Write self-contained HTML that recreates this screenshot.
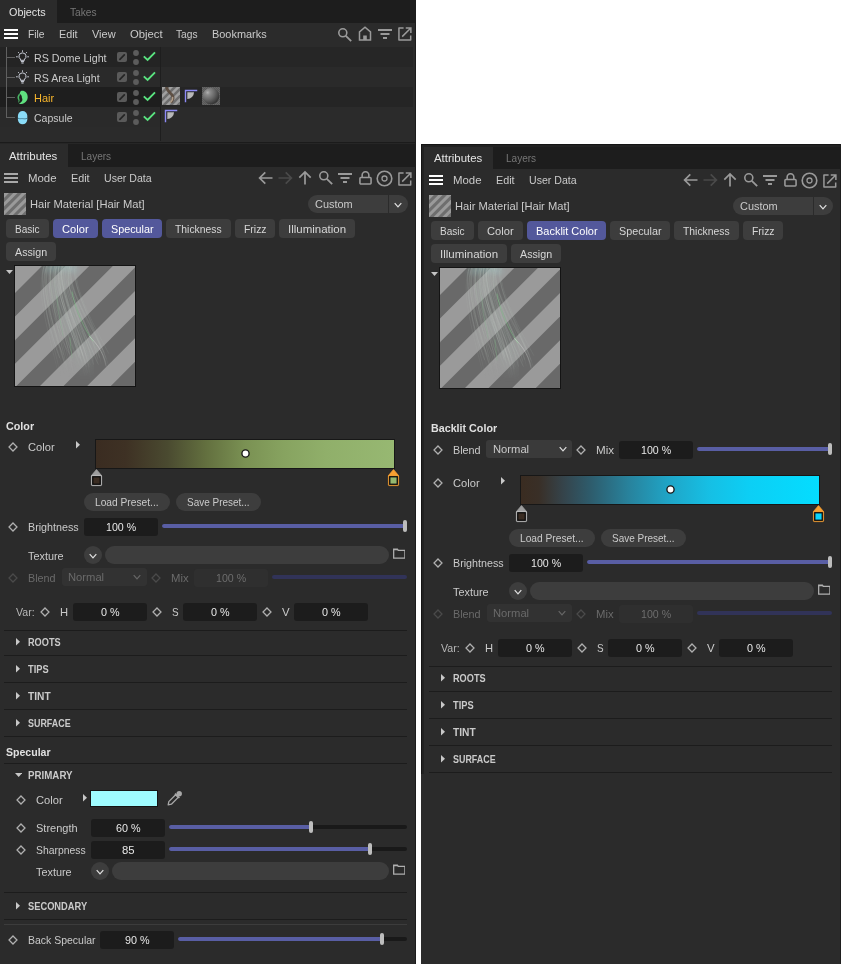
<!DOCTYPE html>
<html lang="en"><head><meta charset="utf-8"><title>Hair Material</title><style>
html,body{margin:0;padding:0;background:#fff;}
body{width:841px;height:964px;position:relative;overflow:hidden;font-family:"Liberation Sans",sans-serif;font-size:11.5px;}
.b{position:absolute;display:block;}
.t{position:absolute;display:block;white-space:pre;line-height:16px;height:16px;transform-origin:0 50%;}
</style></head>
<body>
<div class="b" style="left:0px;top:0px;width:416px;height:964px;background:#2b2b2b;"></div>
<div class="b" style="left:0px;top:0px;width:416px;height:23px;background:#1d1d1d;"></div>
<div class="b" style="left:0px;top:0px;width:57px;height:23px;background:#2b2b2b;"></div>
<span class="t" style="left:8.50px;top:4.00px;color:#e4e4e4;transform:scaleX(0.9385);">Objects</span>
<span class="t" style="left:69.50px;top:4.00px;color:#777;transform:scaleX(0.8853);">Takes</span>
<div class="b" style="left:4px;top:29px;width:14px;height:2px;background:#ffffff;"></div>
<div class="b" style="left:4px;top:33px;width:14px;height:2px;background:#ffffff;"></div>
<div class="b" style="left:4px;top:37px;width:14px;height:2px;background:#ffffff;"></div>
<span class="t" style="left:27.50px;top:26.00px;color:#cacaca;transform:scaleX(0.8958);">File</span>
<span class="t" style="left:58.50px;top:26.00px;color:#cacaca;transform:scaleX(0.9381);">Edit</span>
<span class="t" style="left:91.50px;top:26.00px;color:#cacaca;transform:scaleX(0.9547);">View</span>
<span class="t" style="left:129.50px;top:26.00px;color:#cacaca;transform:scaleX(0.9805);">Object</span>
<span class="t" style="left:175.50px;top:26.00px;color:#cacaca;transform:scaleX(0.8890);">Tags</span>
<span class="t" style="left:211.50px;top:26.00px;color:#cacaca;transform:scaleX(0.9490);">Bookmarks</span>
<svg class="b" style="left:337px;top:27px;" width="16" height="16" viewBox="0 0 16 16"><circle cx="5.8" cy="5.8" r="4" fill="none" stroke="#9a9a9a" stroke-width="1.6"/><path d="M8.8 8.8 L14.2 14.2" stroke="#9a9a9a" stroke-width="1.8" stroke-linecap="butt"/></svg>
<svg class="b" style="left:358px;top:26px;" width="14" height="15" viewBox="0 0 14 15"><path d="M1.5 14 V5.8 L7 1.2 L12.5 5.8 V14 Z" fill="none" stroke="#9a9a9a" stroke-width="1.5" stroke-linejoin="miter"/><rect x="5.2" y="9.5" width="3.6" height="4.5" fill="#9a9a9a"/></svg>
<svg class="b" style="left:378px;top:29px;" width="14" height="12" viewBox="0 0 14 12"><rect x="0" y="0" width="14" height="2" fill="#9a9a9a"/><rect x="2.5" y="4" width="9" height="2" fill="#9a9a9a"/><rect x="5" y="8" width="4" height="2" fill="#9a9a9a"/></svg>
<svg class="b" style="left:398px;top:27px;" width="14" height="14" viewBox="0 0 15 15"><path d="M6 1.2 H1 V13.8 H13.6 V9" fill="none" stroke="#9a9a9a" stroke-width="1.6" stroke-linejoin="round"/><path d="M4.5 10.3 L13.2 1.5 M8.3 1 H13.8 V6.5" fill="none" stroke="#9a9a9a" stroke-width="1.6"/></svg>
<div class="b" style="left:0px;top:47px;width:160px;height:20px;background:#242424;"></div>
<div class="b" style="left:160px;top:47px;width:253px;height:20px;background:#262626;"></div>
<div class="b" style="left:0px;top:67px;width:160px;height:20px;background:#2a2a2a;"></div>
<div class="b" style="left:160px;top:67px;width:253px;height:20px;background:#2a2a2a;"></div>
<div class="b" style="left:0px;top:87px;width:160px;height:20px;background:#1e1e1e;"></div>
<div class="b" style="left:160px;top:87px;width:253px;height:20px;background:#252525;"></div>
<div class="b" style="left:0px;top:107px;width:160px;height:20px;background:#2a2a2a;"></div>
<div class="b" style="left:160px;top:107px;width:253px;height:20px;background:#2b2b2b;"></div>
<div class="b" style="left:160px;top:47px;width:1px;height:94px;background:#1e1e1e;"></div>
<div class="b" style="left:6px;top:47px;width:1px;height:71px;background:#606060;"></div>
<div class="b" style="left:6px;top:57px;width:9px;height:1px;background:#606060;"></div>
<div class="b" style="left:6px;top:77px;width:9px;height:1px;background:#606060;"></div>
<div class="b" style="left:6px;top:97px;width:9px;height:1px;background:#606060;"></div>
<div class="b" style="left:6px;top:117px;width:9px;height:1px;background:#606060;"></div>
<span class="t" style="left:33.80px;top:50.00px;color:#cacaca;transform:scaleX(0.9310);">RS Dome Light</span>
<svg class="b" style="left:117px;top:52px;" width="10" height="10" viewBox="0 0 10 10"><rect x="0" y="0" width="10" height="10" rx="2" fill="#5a5a5a"/><path d="M2.9 7.3 L7.3 2.9" stroke="#242424" stroke-width="1.7" stroke-linecap="round"/></svg>
<svg class="b" style="left:133px;top:50px;" width="6" height="15" viewBox="0 0 6 15"><circle cx="3" cy="3" r="2.9" fill="#5c5c5c"/><circle cx="3" cy="12" r="2.9" fill="#5c5c5c"/></svg>
<svg class="b" style="left:143px;top:51px;" width="14" height="11" viewBox="0 0 14 11"><path d="M0.8 5.4 L4.6 9 L12 1.4" fill="none" stroke="#5ae480" stroke-width="1.9"/></svg>
<span class="t" style="left:33.80px;top:70.00px;color:#cacaca;transform:scaleX(0.9244);">RS Area Light</span>
<svg class="b" style="left:117px;top:72px;" width="10" height="10" viewBox="0 0 10 10"><rect x="0" y="0" width="10" height="10" rx="2" fill="#5a5a5a"/><path d="M2.9 7.3 L7.3 2.9" stroke="#242424" stroke-width="1.7" stroke-linecap="round"/></svg>
<svg class="b" style="left:133px;top:70px;" width="6" height="15" viewBox="0 0 6 15"><circle cx="3" cy="3" r="2.9" fill="#5c5c5c"/><circle cx="3" cy="12" r="2.9" fill="#5c5c5c"/></svg>
<svg class="b" style="left:143px;top:71px;" width="14" height="11" viewBox="0 0 14 11"><path d="M0.8 5.4 L4.6 9 L12 1.4" fill="none" stroke="#5ae480" stroke-width="1.9"/></svg>
<span class="t" style="left:33.80px;top:90.00px;color:#f7b52c;transform:scaleX(0.9529);">Hair</span>
<svg class="b" style="left:117px;top:92px;" width="10" height="10" viewBox="0 0 10 10"><rect x="0" y="0" width="10" height="10" rx="2" fill="#5a5a5a"/><path d="M2.9 7.3 L7.3 2.9" stroke="#242424" stroke-width="1.7" stroke-linecap="round"/></svg>
<svg class="b" style="left:133px;top:90px;" width="6" height="15" viewBox="0 0 6 15"><circle cx="3" cy="3" r="2.9" fill="#5c5c5c"/><circle cx="3" cy="12" r="2.9" fill="#5c5c5c"/></svg>
<svg class="b" style="left:143px;top:91px;" width="14" height="11" viewBox="0 0 14 11"><path d="M0.8 5.4 L4.6 9 L12 1.4" fill="none" stroke="#5ae480" stroke-width="1.9"/></svg>
<span class="t" style="left:33.80px;top:110.00px;color:#cacaca;transform:scaleX(0.9146);">Capsule</span>
<svg class="b" style="left:117px;top:112px;" width="10" height="10" viewBox="0 0 10 10"><rect x="0" y="0" width="10" height="10" rx="2" fill="#5a5a5a"/><path d="M2.9 7.3 L7.3 2.9" stroke="#242424" stroke-width="1.7" stroke-linecap="round"/></svg>
<svg class="b" style="left:133px;top:110px;" width="6" height="15" viewBox="0 0 6 15"><circle cx="3" cy="3" r="2.9" fill="#5c5c5c"/><circle cx="3" cy="12" r="2.9" fill="#5c5c5c"/></svg>
<svg class="b" style="left:143px;top:111px;" width="14" height="11" viewBox="0 0 14 11"><path d="M0.8 5.4 L4.6 9 L12 1.4" fill="none" stroke="#5ae480" stroke-width="1.9"/></svg>
<svg class="b" style="left:15px;top:50px;" width="15" height="14" viewBox="0 0 15 14"><path d="M7.5 2.9 A3.45 3.45 0 0 0 5.5 9.2 V10.3 H9.5 V9.2 A3.45 3.45 0 0 0 7.5 2.9 Z" fill="none" stroke="#d2d6e0" stroke-width="1"/><path d="M5.9 11.6 H9.1 M6.4 13 H8.6" stroke="#d2d6e0" stroke-width="1"/><path d="M7.5 0.4 V1.8 M3.2 2.2 L4.2 3.3 M11.8 2.2 L10.8 3.3 M1.1 6.8 H2.7 M12.3 6.8 H13.9" stroke="#d2d6e0" stroke-width="1"/></svg>
<svg class="b" style="left:15px;top:70px;" width="15" height="14" viewBox="0 0 15 14"><path d="M7.5 2.9 A3.45 3.45 0 0 0 5.5 9.2 V10.3 H9.5 V9.2 A3.45 3.45 0 0 0 7.5 2.9 Z" fill="none" stroke="#d2d6e0" stroke-width="1"/><path d="M5.9 11.6 H9.1 M6.4 13 H8.6" stroke="#d2d6e0" stroke-width="1"/><path d="M7.5 0.4 V1.8 M3.2 2.2 L4.2 3.3 M11.8 2.2 L10.8 3.3 M1.1 6.8 H2.7 M12.3 6.8 H13.9" stroke="#d2d6e0" stroke-width="1"/></svg>
<svg class="b" style="left:16px;top:90px;" width="13" height="15" viewBox="0 0 13 15"><path d="M5 1 C8.5 0.2 11.8 3 11.7 7.2 C11.6 10.8 9 13.4 5.5 14 C4.5 14.2 3.4 14.1 3 13.8 C5 12.8 6.4 11.2 6.4 9.6 C6.4 8.4 5.6 7.6 5.8 6.4 C5.4 5.2 4.4 4.2 3.6 3.8 C3.9 2.6 4.2 1.6 5 1 Z" fill="#5fe07f"/><path d="M3.6 3.6 C1.8 4.8 1 7 1.7 8.8 C2.1 9.8 2.7 10.2 2.5 11.2 C2.3 12 1.9 12.4 2.1 12.8 C3.5 11.8 3.9 10.6 3.5 9.4 C3.1 8.2 2.7 6.8 4 5 Z" fill="#4cc46c" fill-opacity=".9"/></svg>
<svg class="b" style="left:17px;top:110px;" width="11" height="15" viewBox="0 0 11 15"><rect x="0.9" y="1" width="9.4" height="13.3" rx="4.7" fill="#8adcf8"/><path d="M1 8.2 C2.6 9.2 4 8.4 5.6 8.6 C7.2 8.8 8.6 9.2 10.2 8.2" fill="none" stroke="#3f7890" stroke-width="0.9"/></svg>
<svg class="b" style="left:162px;top:87px;" width="18" height="18" viewBox="0 0 18 18"><defs><linearGradient id="lgt1" x1="0" y1="0" x2="0" y2="1"><stop offset="0" stop-color="#fff"/><stop offset=".68" stop-color="#fff"/><stop offset=".95" stop-color="#000"/></linearGradient><mask id="mkt1" maskUnits="userSpaceOnUse" x="0" y="0" width="120" height="120"><rect width="120" height="120" fill="url(#lgt1)"/></mask><clipPath id="cpt1"><rect x="0" y="0" width="18" height="18"/></clipPath><filter id="blt1" x="-20%" y="-20%" width="140%" height="140%"><feGaussianBlur stdDeviation="3"/></filter></defs><rect x="0" y="0" width="18" height="18" fill="#141414"/><g transform="translate(0 0)" clip-path="url(#cpt1)"><rect x="0" y="0" width="18" height="18" fill="#a0a0a0"/><path d="M4.05 0 L7.59 0 L0 7.59 L0 4.05 Z" fill="#6e6e6e"/><path d="M11.13 0 L14.67 0 L0 14.67 L0 11.13 Z" fill="#6e6e6e"/><path d="M18.21 0 L21.75 0 L0 21.75 L0 18.21 Z" fill="#6e6e6e"/><path d="M25.29 0 L28.83 0 L0 28.83 L0 25.29 Z" fill="#6e6e6e"/><path d="M32.37 0 L35.91 0 L0 35.91 L0 32.37 Z" fill="#6e6e6e"/><path d="M39.45 0 L42.99 0 L0 42.99 L0 39.45 Z" fill="#6e6e6e"/><g transform="scale(0.15)"></g></g></svg>
<svg class="b" style="left:162px;top:87px" width="18" height="18" viewBox="0 0 18 18"><path d="M4.6 0.6 C5.2 3.4 8 5.6 10 8 C11.6 10.2 11.2 12.6 9.6 14.6" fill="none" stroke="#594a3d" stroke-width="2.8" stroke-opacity=".92" stroke-linecap="round"/><path d="M10.6 10.6 C10.8 12.4 10 13.8 8.8 15" fill="none" stroke="#c4b29c" stroke-width="1.6" stroke-opacity=".8" stroke-linecap="round"/></svg>
<svg class="b" style="left:184px;top:89px;" width="14" height="14" viewBox="0 0 14 14"><path d="M1.5 13.2 V1.5 H13.25" fill="none" stroke="#8d8af5" stroke-width="1.4"/><path d="M3.3 3.3 H10 A6.7 6.7 0 0 1 3.3 10 Z" fill="#b8b8b8"/></svg>
<svg class="b" style="left:164px;top:109px;" width="14" height="14" viewBox="0 0 14 14"><path d="M1.5 13.2 V1.5 H13.25" fill="none" stroke="#8d8af5" stroke-width="1.4"/><path d="M3.3 3.3 H10 A6.7 6.7 0 0 1 3.3 10 Z" fill="#b8b8b8"/></svg>
<svg class="b" style="left:202px;top:87px;" width="18" height="18" viewBox="0 0 18 18"><defs><radialGradient id="sg" cx="30%" cy="28%" r="78%"><stop offset="0" stop-color="#b0b0b0"/><stop offset=".18" stop-color="#8c8c8c"/><stop offset=".55" stop-color="#666"/><stop offset="1" stop-color="#303030"/></radialGradient><pattern id="ck" width="2" height="2" patternUnits="userSpaceOnUse"><rect width="2" height="2" fill="#575757"/><rect width="1" height="1" fill="#666"/><rect x="1" y="1" width="1" height="1" fill="#666"/></pattern></defs><rect width="18" height="18" fill="url(#ck)"/><circle cx="9" cy="9.2" r="8.3" fill="url(#sg)"/></svg>
<div class="b" style="left:0px;top:142px;width:416px;height:1px;background:#1b1b1b;"></div>
<div class="b" style="left:0px;top:143px;width:416px;height:1px;background:#262626;"></div>
<div class="b" style="left:415px;top:0px;width:1px;height:964px;background:#1c1c1c;"></div>
<div class="b" style="left:0px;top:144px;width:416px;height:23px;background:#1d1d1d;"></div>
<div class="b" style="left:0px;top:144px;width:68px;height:23px;background:#2b2b2b;"></div>
<span class="t" style="left:8.90px;top:148.00px;color:#e4e4e4;transform:scaleX(0.9922);">Attributes</span>
<span class="t" style="left:81.00px;top:148.00px;color:#777;transform:scaleX(0.8717);">Layers</span>
<div class="b" style="left:4px;top:173px;width:14px;height:2px;background:#a8a8a8;"></div>
<div class="b" style="left:4px;top:177px;width:14px;height:2px;background:#a8a8a8;"></div>
<div class="b" style="left:4px;top:181px;width:14px;height:2px;background:#a8a8a8;"></div>
<span class="t" style="left:27.80px;top:170.00px;color:#cacaca;transform:scaleX(0.9937);">Mode</span>
<span class="t" style="left:70.50px;top:170.00px;color:#cacaca;transform:scaleX(0.9381);">Edit</span>
<span class="t" style="left:103.80px;top:170.00px;color:#cacaca;transform:scaleX(0.9193);">User Data</span>
<svg class="b" style="left:258px;top:171px;" width="15" height="14" viewBox="0 0 15 14"><path d="M14.5 7 H2.5 M7.3 1.3 L1.6 7 L7.3 12.7" fill="none" stroke="#9a9a9a" stroke-width="1.7" stroke-linejoin="miter"/></svg>
<svg class="b" style="left:278px;top:171px;" width="15" height="14" viewBox="0 0 15 14"><path d="M0.5 7 H12.5 M7.7 1.3 L13.4 7 L7.7 12.7" fill="none" stroke="#4a4a4a" stroke-width="1.7" stroke-linejoin="miter"/></svg>
<svg class="b" style="left:298px;top:170px;" width="14" height="15" viewBox="0 0 14 15"><path d="M7 14.5 V2.5 M1.3 7.7 L7 2 L12.7 7.7" fill="none" stroke="#9a9a9a" stroke-width="1.7" stroke-linejoin="miter"/></svg>
<svg class="b" style="left:317.6px;top:170.2px;" width="16" height="16" viewBox="0 0 16 16"><circle cx="5.8" cy="5.8" r="4" fill="none" stroke="#9a9a9a" stroke-width="1.6"/><path d="M8.8 8.8 L14.2 14.2" stroke="#9a9a9a" stroke-width="1.8" stroke-linecap="butt"/></svg>
<svg class="b" style="left:338px;top:173px;" width="14" height="12" viewBox="0 0 14 12"><rect x="0" y="0" width="14" height="2" fill="#9a9a9a"/><rect x="2.5" y="4" width="9" height="2" fill="#9a9a9a"/><rect x="5" y="8" width="4" height="2" fill="#9a9a9a"/></svg>
<svg class="b" style="left:358.5px;top:171.2px;" width="13" height="14" viewBox="0 0 14 15"><rect x="1" y="7" width="12" height="7" rx="1" fill="none" stroke="#9a9a9a" stroke-width="1.7"/><path d="M3.4 7 V4.4 A3.6 3.6 0 0 1 10.6 4.4 V7" fill="none" stroke="#9a9a9a" stroke-width="1.7"/></svg>
<svg class="b" style="left:376px;top:170px;" width="17" height="17" viewBox="0 0 17 17"><circle cx="8.5" cy="8.5" r="7.3" fill="none" stroke="#9a9a9a" stroke-width="1.6"/><circle cx="8.5" cy="8.5" r="2.5" fill="none" stroke="#9a9a9a" stroke-width="1.3"/></svg>
<svg class="b" style="left:398px;top:172px;" width="14" height="14" viewBox="0 0 15 15"><path d="M6 1.2 H1 V13.8 H13.6 V9" fill="none" stroke="#9a9a9a" stroke-width="1.6" stroke-linejoin="round"/><path d="M4.5 10.3 L13.2 1.5 M8.3 1 H13.8 V6.5" fill="none" stroke="#9a9a9a" stroke-width="1.6"/></svg>
<svg class="b" style="left:4px;top:193px;" width="22" height="22" viewBox="0 0 22 22"><defs><linearGradient id="lgh0" x1="0" y1="0" x2="0" y2="1"><stop offset="0" stop-color="#fff"/><stop offset=".68" stop-color="#fff"/><stop offset=".95" stop-color="#000"/></linearGradient><mask id="mkh0" maskUnits="userSpaceOnUse" x="0" y="0" width="120" height="120"><rect width="120" height="120" fill="url(#lgh0)"/></mask><clipPath id="cph0"><rect x="0" y="0" width="22" height="22"/></clipPath><filter id="blh0" x="-20%" y="-20%" width="140%" height="140%"><feGaussianBlur stdDeviation="3"/></filter></defs><rect x="0" y="0" width="22" height="22" fill="#141414"/><g transform="translate(0 0)" clip-path="url(#cph0)"><rect x="0" y="0" width="22" height="22" fill="#9a9a9a"/><path d="M4.95 0 L9.28 0 L0 9.28 L0 4.95 Z" fill="#6e6e6e"/><path d="M13.60 0 L17.93 0 L0 17.93 L0 13.60 Z" fill="#6e6e6e"/><path d="M22.26 0 L26.58 0 L0 26.58 L0 22.26 Z" fill="#6e6e6e"/><path d="M30.91 0 L35.24 0 L0 35.24 L0 30.91 Z" fill="#6e6e6e"/><path d="M39.56 0 L43.89 0 L0 43.89 L0 39.56 Z" fill="#6e6e6e"/><path d="M48.22 0 L52.54 0 L0 52.54 L0 48.22 Z" fill="#6e6e6e"/><g transform="scale(0.18333333333333332)"></g></g></svg>
<span class="t" style="left:30.10px;top:196.00px;color:#cacaca;transform:scaleX(0.9694);">Hair Material [Hair Mat]</span>
<div class="b" style="left:308px;top:195px;width:100px;height:18px;background:#3d3d3d;border-radius:9px;"></div>
<div class="b" style="left:388px;top:195px;width:1px;height:18px;background:#2b2b2b;"></div>
<span class="t" style="left:314.50px;top:196.00px;color:#cacaca;transform:scaleX(0.9489);">Custom</span>
<svg class="b" style="left:393px;top:200.5px;" width="10" height="8" viewBox="0 0 10 8"><path d="M1.7000000000000002 2.2 L5 5.8 L8.3 2.2" fill="none" stroke="#e0e0e0" stroke-width="1.25" stroke-linecap="butt"/></svg>
<div class="b" style="left:6px;top:219px;width:43px;height:19px;background:#3d3d3d;border-radius:4px;"></div>
<span class="t" style="left:15.20px;top:221.00px;color:#d6d6d6;transform:scaleX(0.8747);">Basic</span>
<div class="b" style="left:53px;top:219px;width:45px;height:19px;background:#53589b;border-radius:4px;"></div>
<span class="t" style="left:62.20px;top:221.00px;color:#ffffff;transform:scaleX(0.9678);">Color</span>
<div class="b" style="left:102px;top:219px;width:60px;height:19px;background:#53589b;border-radius:4px;"></div>
<span class="t" style="left:110.70px;top:221.00px;color:#ffffff;transform:scaleX(0.9385);">Specular</span>
<div class="b" style="left:166px;top:219px;width:65px;height:19px;background:#3d3d3d;border-radius:4px;"></div>
<span class="t" style="left:175.20px;top:221.00px;color:#d6d6d6;transform:scaleX(0.8999);">Thickness</span>
<div class="b" style="left:235px;top:219px;width:40px;height:19px;background:#3d3d3d;border-radius:4px;"></div>
<span class="t" style="left:243.70px;top:221.00px;color:#d6d6d6;transform:scaleX(0.9068);">Frizz</span>
<div class="b" style="left:279px;top:219px;width:76px;height:19px;background:#3d3d3d;border-radius:4px;"></div>
<span class="t" style="left:287.95px;top:221.00px;color:#d6d6d6;transform:scaleX(0.9988);">Illumination</span>
<div class="b" style="left:6px;top:242px;width:50px;height:19px;background:#3d3d3d;border-radius:4px;"></div>
<span class="t" style="left:14.95px;top:244.00px;color:#d6d6d6;transform:scaleX(0.9296);">Assign</span>
<svg class="b" style="left:6px;top:270px;" width="7" height="4" viewBox="0 0 7 4"><path d="M0 0 L7 0 L3.5 4 Z" fill="#c4c4c4"/></svg>
<svg class="b" style="left:14px;top:265px;" width="122" height="122" viewBox="0 0 122 122"><defs><linearGradient id="lgp0" x1="0" y1="0" x2="0" y2="1"><stop offset="0" stop-color="#fff"/><stop offset=".68" stop-color="#fff"/><stop offset=".95" stop-color="#000"/></linearGradient><mask id="mkp0" maskUnits="userSpaceOnUse" x="0" y="0" width="120" height="120"><rect width="120" height="120" fill="url(#lgp0)"/></mask><clipPath id="cpp0"><rect x="0" y="0" width="120" height="120"/></clipPath><filter id="blp0" x="-20%" y="-20%" width="140%" height="140%"><feGaussianBlur stdDeviation="3"/></filter></defs><rect x="0" y="0" width="122" height="122" fill="#141414"/><g transform="translate(1 1)" clip-path="url(#cpp0)"><rect x="0" y="0" width="120" height="120" fill="#9a9a9a"/><path d="M27.00 0 L50.60 0 L0 50.60 L0 27.00 Z" fill="#696969"/><path d="M74.20 0 L97.80 0 L0 97.80 L0 74.20 Z" fill="#696969"/><path d="M121.40 0 L145.00 0 L0 145.00 L0 121.40 Z" fill="#696969"/><path d="M168.60 0 L192.20 0 L0 192.20 L0 168.60 Z" fill="#696969"/><path d="M215.80 0 L239.40 0 L0 239.40 L0 215.80 Z" fill="#696969"/><path d="M263.00 0 L286.60 0 L0 286.60 L0 263.00 Z" fill="#696969"/><g transform="scale(1.0)"><g fill="none" stroke-linecap="round" mask="url(#mkp0)"><g filter="url(#blp0)"><path d="M44 0 C38 28 56 50 64 74 C70 90 72 98 70 108" stroke="#a2aea6" stroke-opacity=".18" stroke-width="20"/><path d="M32 3 C40 0 52 0 60 3" stroke="#a8dede" stroke-opacity=".45" stroke-width="5"/></g><path d="M29.3 0 C20.7 22.3 30.8 56.7 41.9 101.6" stroke="#b8c4bc" stroke-opacity="0.13" stroke-width="0.8"/><path d="M29.0 0 C23.3 18.5 35.1 67.4 44.6 91.8" stroke="#b8c4bc" stroke-opacity="0.25" stroke-width="0.8"/><path d="M31.6 0 C22.9 24.9 33.9 57.7 45.6 109.4" stroke="#aeb8b0" stroke-opacity="0.19" stroke-width="0.8"/><path d="M32.2 0 C26.7 19.5 35.2 64.5 48.4 88.5" stroke="#b8c4bc" stroke-opacity="0.11" stroke-width="0.8"/><path d="M31.5 0 C24.4 22.7 39.2 59.6 49.5 96.3" stroke="#c4ccc6" stroke-opacity="0.21" stroke-width="0.8"/><path d="M32.3 0 C28.6 23.8 38.3 67.8 50.0 98.6" stroke="#aeb8b0" stroke-opacity="0.18" stroke-width="0.8"/><path d="M32.7 0 C26.2 25.7 36.3 62.7 49.7 108.4" stroke="#9aa49c" stroke-opacity="0.15" stroke-width="0.8"/><path d="M34.1 0 C25.5 18.7 39.9 64.4 51.8 105.1" stroke="#aeb8b0" stroke-opacity="0.11" stroke-width="0.8"/><path d="M36.1 0 C32.1 20.3 42.9 64.0 53.8 109.8" stroke="#aeb8b0" stroke-opacity="0.25" stroke-width="0.8"/><path d="M35.4 0 C27.7 20.3 46.6 60.8 54.7 97.8" stroke="#d8dfd9" stroke-opacity="0.11" stroke-width="0.8"/><path d="M36.5 0 C32.4 24.9 43.6 61.0 55.4 107.2" stroke="#9aa49c" stroke-opacity="0.21" stroke-width="0.8"/><path d="M36.9 0 C28.8 23.3 40.7 66.0 54.6 88.0" stroke="#c4ccc6" stroke-opacity="0.14" stroke-width="0.8"/><path d="M36.0 0 C30.4 25.6 48.4 62.2 56.8 94.9" stroke="#b8c4bc" stroke-opacity="0.20" stroke-width="0.8"/><path d="M39.6 0 C36.3 23.4 48.7 60.8 58.2 106.9" stroke="#d8dfd9" stroke-opacity="0.12" stroke-width="0.8"/><path d="M39.9 0 C32.1 19.3 45.6 56.6 56.9 87.6" stroke="#aeb8b0" stroke-opacity="0.19" stroke-width="0.8"/><path d="M40.1 0 C31.6 19.7 52.4 63.6 63.4 100.7" stroke="#9aa49c" stroke-opacity="0.20" stroke-width="0.8"/><path d="M40.6 0 C37.4 21.8 48.0 57.7 59.5 97.7" stroke="#9aa49c" stroke-opacity="0.22" stroke-width="0.8"/><path d="M41.2 0 C33.5 25.6 52.9 64.3 64.0 98.4" stroke="#aeb8b0" stroke-opacity="0.22" stroke-width="0.8"/><path d="M41.2 0 C37.3 22.1 58.1 60.3 64.9 88.2" stroke="#c4ccc6" stroke-opacity="0.19" stroke-width="0.8"/><path d="M43.8 0 C39.7 25.9 56.9 65.7 64.1 91.4" stroke="#d8dfd9" stroke-opacity="0.22" stroke-width="0.8"/><path d="M42.2 0 C33.4 18.2 54.6 59.1 66.3 94.5" stroke="#b8c4bc" stroke-opacity="0.25" stroke-width="0.8"/><path d="M43.8 0 C40.5 20.9 57.7 58.7 70.0 109.7" stroke="#c4ccc6" stroke-opacity="0.15" stroke-width="0.8"/><path d="M44.6 0 C35.6 25.3 60.1 63.7 71.4 100.6" stroke="#aeb8b0" stroke-opacity="0.25" stroke-width="0.8"/><path d="M46.5 0 C38.5 24.3 59.7 65.6 71.1 97.5" stroke="#d8dfd9" stroke-opacity="0.17" stroke-width="0.8"/><path d="M47.0 0 C43.9 18.2 58.9 61.6 68.2 89.8" stroke="#c4ccc6" stroke-opacity="0.20" stroke-width="0.8"/><path d="M47.1 0 C39.0 22.4 57.8 65.6 71.6 108.5" stroke="#aeb8b0" stroke-opacity="0.18" stroke-width="0.8"/><path d="M49.1 0 C45.0 19.7 60.5 59.5 72.5 106.9" stroke="#c4ccc6" stroke-opacity="0.22" stroke-width="0.8"/><path d="M47.3 0 C38.7 23.9 67.4 63.9 74.3 106.0" stroke="#b8c4bc" stroke-opacity="0.17" stroke-width="0.8"/><path d="M50.3 0 C44.5 18.1 64.6 58.2 75.1 98.8" stroke="#aeb8b0" stroke-opacity="0.22" stroke-width="0.8"/><path d="M47.9 0 C39.7 18.5 65.5 62.4 74.1 100.9" stroke="#d8dfd9" stroke-opacity="0.23" stroke-width="0.8"/><path d="M48.4 0 C41.1 24.2 67.8 62.7 77.7 92.0" stroke="#aeb8b0" stroke-opacity="0.17" stroke-width="0.8"/><path d="M51.1 0 C46.3 21.6 68.7 61.7 78.5 98.3" stroke="#c4ccc6" stroke-opacity="0.21" stroke-width="0.8"/><path d="M52.8 0 C47.2 25.5 74.9 57.6 82.2 92.2" stroke="#aeb8b0" stroke-opacity="0.16" stroke-width="0.8"/><path d="M51.3 0 C43.5 20.4 68.7 65.3 81.7 96.3" stroke="#9aa49c" stroke-opacity="0.12" stroke-width="0.8"/><path d="M54.2 0 C50.9 21.2 74.5 67.9 84.6 91.3" stroke="#c4ccc6" stroke-opacity="0.13" stroke-width="0.8"/><path d="M53.1 0 C45.2 20.5 74.8 56.2 83.0 94.1" stroke="#b8c4bc" stroke-opacity="0.17" stroke-width="0.8"/><path d="M54.8 0 C47.6 25.7 70.2 67.0 83.3 98.4" stroke="#c4ccc6" stroke-opacity="0.26" stroke-width="0.8"/><path d="M53.1 0 C48.8 20.2 70.7 61.1 83.7 87.0" stroke="#9aa49c" stroke-opacity="0.16" stroke-width="0.8"/><path d="M55.5 0 C48.4 20.2 78.7 58.2 86.3 97.9" stroke="#aeb8b0" stroke-opacity="0.14" stroke-width="0.8"/><path d="M54.1 0 C48.7 19.8 73.0 57.5 84.9 92.3" stroke="#aeb8b0" stroke-opacity="0.15" stroke-width="0.8"/><path d="M56.9 0 C48.7 22.2 78.9 57.3 91.0 92.4" stroke="#c4ccc6" stroke-opacity="0.14" stroke-width="0.8"/><path d="M56.1 0 C50.2 19.6 81.7 64.1 92.1 101.1" stroke="#9aa49c" stroke-opacity="0.16" stroke-width="0.8"/><path d="M56.1 0 C51.5 22.4 76.7 61.7 89.2 86.4" stroke="#d8dfd9" stroke-opacity="0.12" stroke-width="0.8"/><path d="M59.9 0 C56.0 21.1 81.4 64.3 91.4 97.9" stroke="#c4ccc6" stroke-opacity="0.15" stroke-width="0.8"/><path d="M60.7 0 C54.1 20.8 80.6 57.6 94.1 101.3" stroke="#aeb8b0" stroke-opacity="0.20" stroke-width="0.8"/><path d="M61.5 0 C56.5 21.0 83.6 67.7 93.6 87.3" stroke="#b8c4bc" stroke-opacity="0.14" stroke-width="0.8"/><path d="M57 26 C60 42 66 54 70 62 C73 68 76 72 78 75" stroke="#7fd08a" stroke-opacity=".5" stroke-width="0.9"/><path d="M55 72 C55 80 57 86 57 92" stroke="#7fc888" stroke-opacity=".35" stroke-width="0.9"/><path d="M42 30 C42 44 46 56 48 70" stroke="#86c890" stroke-opacity=".28" stroke-width="0.9"/><path d="M74 70 C80 76 88 84 91 100" stroke="#f4f8f4" stroke-opacity=".3" stroke-width="1"/></g></g></g></svg>
<span class="t" style="left:5.50px;top:418.00px;color:#e0e0e0;transform:scaleX(0.9357);font-weight:700;">Color</span>
<svg class="b" style="left:7px;top:441px;" width="12" height="12" viewBox="0 0 12 12"><path d="M6 2 L10 6 L6 10 L2 6 Z" fill="none" stroke="#b0b0b0" stroke-width="1.25" stroke-linejoin="miter"/></svg>
<span class="t" style="left:28.00px;top:439.00px;color:#cacaca;transform:scaleX(0.9678);">Color</span>
<svg class="b" style="left:76px;top:441px;" width="4" height="7.5" viewBox="0 0 4 7.5"><path d="M0 0 L4 3.75 L0 7.5 Z" fill="#c8c8c8"/></svg>
<div class="b" style="left:95px;top:439px;width:300px;height:30px;background:#171717;"></div>
<div class="b" style="left:96px;top:440px;width:298px;height:28px;background:linear-gradient(90deg,#3a2c21 0%,#3e3124 10%,#4a4a30 24%,#63703f 37%,#7a9153 50%,#87a360 63%,#90af6a 77%,#97b872 100%);"></div>
<svg class="b" style="left:240px;top:448px;" width="11" height="11" viewBox="0 0 11 11"><circle cx="5.5" cy="5.5" r="3.6" fill="#fff" stroke="#1a1a1a" stroke-width="1.4"/></svg>
<svg class="b" style="left:90px;top:469px;" width="13" height="18" viewBox="0 0 13 18"><path d="M6.5 0.6 L11.6 6.6 H1.4 Z" fill="#9e9e9e" stroke="#9e9e9e" stroke-width="0.8" stroke-linejoin="round"/><rect x="1.4" y="6.4" width="10.2" height="10.2" rx="0.8" fill="#c2c2c2" stroke="#c2c2c2" stroke-width="0.7"/><rect x="2.75" y="7.75" width="7.5" height="7.5" fill="#3a2c22" stroke="#0a0a0a" stroke-width="1.3"/></svg>
<svg class="b" style="left:387px;top:469px;" width="13" height="18" viewBox="0 0 13 18"><path d="M6.5 0.6 L11.6 6.6 H1.4 Z" fill="#f8a032" stroke="#f8a032" stroke-width="0.8" stroke-linejoin="round"/><rect x="1.4" y="6.4" width="10.2" height="10.2" rx="0.8" fill="#f8a032" stroke="#f8a032" stroke-width="0.7"/><rect x="2.75" y="7.75" width="7.5" height="7.5" fill="#94b870" stroke="#0a0a0a" stroke-width="1.3"/></svg>
<div class="b" style="left:84px;top:493px;width:86px;height:18px;background:#3d3d3d;border-radius:9.0px;"></div>
<span class="t" style="left:95.20px;top:494.00px;color:#cacaca;transform:scaleX(0.8882);">Load Preset...</span>
<div class="b" style="left:176px;top:493px;width:85px;height:18px;background:#3d3d3d;border-radius:9.0px;"></div>
<span class="t" style="left:187.20px;top:494.00px;color:#cacaca;transform:scaleX(0.8666);">Save Preset...</span>
<svg class="b" style="left:7px;top:521px;" width="12" height="12" viewBox="0 0 12 12"><path d="M6 2 L10 6 L6 10 L2 6 Z" fill="none" stroke="#b0b0b0" stroke-width="1.25" stroke-linejoin="miter"/></svg>
<span class="t" style="left:28.00px;top:519.00px;color:#cacaca;transform:scaleX(0.9311);">Brightness</span>
<div class="b" style="left:84px;top:518px;width:74px;height:18px;background:#1c1c1c;border-radius:3px;"></div>
<span class="t" style="left:105.95px;top:519.00px;color:#e6e6e6;transform:scaleX(0.9230);">100 %</span>
<div class="b" style="left:162px;top:524px;width:245px;height:4px;background:#191919;border-radius:2px;"></div>
<div class="b" style="left:162px;top:524px;width:243.0px;height:4px;background:#595ea4;border-radius:2px;"></div>
<div class="b" style="left:403px;top:520px;width:4px;height:12px;background:#bdbdbd;border-radius:2px;"></div>
<span class="t" style="left:28.00px;top:548.00px;color:#cacaca;transform:scaleX(0.9438);">Texture</span>
<div class="b" style="left:84px;top:546px;width:18px;height:18px;background:#3d3d3d;border-radius:9px;"></div>
<svg class="b" style="left:88px;top:551.5px;" width="10" height="8" viewBox="0 0 10 8"><path d="M1.7000000000000002 2.2 L5 5.8 L8.3 2.2" fill="none" stroke="#e0e0e0" stroke-width="1.25" stroke-linecap="butt"/></svg>
<div class="b" style="left:105px;top:546px;width:284px;height:18px;background:#3d3d3d;border-radius:9px;"></div>
<svg class="b" style="left:392.7px;top:548px;" width="12.6" height="11" viewBox="0 0 13 11"><path d="M0.7 10.3 V0.9 H4.6 L5.4 2.2 H12.3 V10.3 Z" fill="none" stroke="#b0b0b0" stroke-width="1.3" stroke-linejoin="miter"/><path d="M0.7 0.9 H4.6 L5.4 2.2 H0.7 Z" fill="#b0b0b0"/></svg>
<svg class="b" style="left:7px;top:572px;" width="12" height="12" viewBox="0 0 12 12"><path d="M6 2 L10 6 L6 10 L2 6 Z" fill="none" stroke="#4a4a4a" stroke-width="1.25" stroke-linejoin="miter"/></svg>
<span class="t" style="left:28.00px;top:570.00px;color:#6a6a6a;transform:scaleX(0.9381);">Blend</span>
<div class="b" style="left:62px;top:568px;width:85px;height:18px;background:#323232;border-radius:3px;"></div>
<span class="t" style="left:68.00px;top:569.00px;color:#6a6a6a;transform:scaleX(0.9740);">Normal</span>
<svg class="b" style="left:132px;top:572.7px;" width="10" height="8" viewBox="0 0 10 8"><path d="M1.7000000000000002 2.1 L5 5.9 L8.3 2.1" fill="none" stroke="#666" stroke-width="1.2" stroke-linecap="butt"/></svg>
<svg class="b" style="left:150px;top:572px;" width="12" height="12" viewBox="0 0 12 12"><path d="M6 2 L10 6 L6 10 L2 6 Z" fill="none" stroke="#4a4a4a" stroke-width="1.25" stroke-linejoin="miter"/></svg>
<span class="t" style="left:171.00px;top:570.00px;color:#6a6a6a;transform:scaleX(0.9838);">Mix</span>
<div class="b" style="left:194px;top:569px;width:74px;height:18px;background:#2f2f2f;border-radius:3px;"></div>
<span class="t" style="left:215.95px;top:570.00px;color:#6d6d6d;transform:scaleX(0.9230);">100 %</span>
<div class="b" style="left:272px;top:575px;width:135px;height:4px;background:#313358;border-radius:2px;"></div>
<span class="t" style="left:15.50px;top:604.00px;color:#b8b8b8;transform:scaleX(0.9185);">Var:</span>
<svg class="b" style="left:39px;top:606px;" width="12" height="12" viewBox="0 0 12 12"><path d="M6 2 L10 6 L6 10 L2 6 Z" fill="none" stroke="#b0b0b0" stroke-width="1.25" stroke-linejoin="miter"/></svg>
<span class="t" style="left:60.00px;top:604.00px;color:#cacaca;transform:scaleX(0.9744);">H</span>
<div class="b" style="left:73px;top:603px;width:74px;height:18px;background:#1c1c1c;border-radius:3px;"></div>
<span class="t" style="left:100.70px;top:604.00px;color:#e6e6e6;transform:scaleX(0.9381);">0 %</span>
<svg class="b" style="left:151px;top:606px;" width="12" height="12" viewBox="0 0 12 12"><path d="M6 2 L10 6 L6 10 L2 6 Z" fill="none" stroke="#b0b0b0" stroke-width="1.25" stroke-linejoin="miter"/></svg>
<span class="t" style="left:171.50px;top:604.00px;color:#cacaca;transform:scaleX(0.8603);">S</span>
<div class="b" style="left:183px;top:603px;width:74px;height:18px;background:#1c1c1c;border-radius:3px;"></div>
<span class="t" style="left:210.70px;top:604.00px;color:#e6e6e6;transform:scaleX(0.9381);">0 %</span>
<svg class="b" style="left:261px;top:606px;" width="12" height="12" viewBox="0 0 12 12"><path d="M6 2 L10 6 L6 10 L2 6 Z" fill="none" stroke="#b0b0b0" stroke-width="1.25" stroke-linejoin="miter"/></svg>
<span class="t" style="left:281.50px;top:604.00px;color:#cacaca;transform:scaleX(0.9906);">V</span>
<div class="b" style="left:294px;top:603px;width:74px;height:18px;background:#1c1c1c;border-radius:3px;"></div>
<span class="t" style="left:321.70px;top:604.00px;color:#e6e6e6;transform:scaleX(0.9381);">0 %</span>
<div class="b" style="left:4px;top:630px;width:403px;height:1px;background:#1c1c1c;"></div>
<svg class="b" style="left:16px;top:638px;" width="4" height="7.5" viewBox="0 0 4 7.5"><path d="M0 0 L4 3.75 L0 7.5 Z" fill="#c8c8c8"/></svg>
<span class="t" style="left:28.00px;top:635.00px;color:#cacaca;transform:scaleX(0.9167);font-weight:700;font-size:10px;">ROOTS</span>
<div class="b" style="left:4px;top:655px;width:403px;height:1px;background:#1c1c1c;"></div>
<svg class="b" style="left:16px;top:665px;" width="4" height="7.5" viewBox="0 0 4 7.5"><path d="M0 0 L4 3.75 L0 7.5 Z" fill="#c8c8c8"/></svg>
<span class="t" style="left:28.00px;top:662.00px;color:#cacaca;transform:scaleX(0.9265);font-weight:700;font-size:10px;">TIPS</span>
<div class="b" style="left:4px;top:682px;width:403px;height:1px;background:#1c1c1c;"></div>
<svg class="b" style="left:16px;top:692px;" width="4" height="7.5" viewBox="0 0 4 7.5"><path d="M0 0 L4 3.75 L0 7.5 Z" fill="#c8c8c8"/></svg>
<span class="t" style="left:28.00px;top:689.00px;color:#cacaca;transform:scaleX(1.0172);font-weight:700;font-size:10px;">TINT</span>
<div class="b" style="left:4px;top:709px;width:403px;height:1px;background:#1c1c1c;"></div>
<svg class="b" style="left:16px;top:719px;" width="4" height="7.5" viewBox="0 0 4 7.5"><path d="M0 0 L4 3.75 L0 7.5 Z" fill="#c8c8c8"/></svg>
<span class="t" style="left:28.00px;top:716.00px;color:#cacaca;transform:scaleX(0.8913);font-weight:700;font-size:10px;">SURFACE</span>
<div class="b" style="left:4px;top:736px;width:403px;height:1px;background:#1c1c1c;"></div>
<span class="t" style="left:5.50px;top:744.00px;color:#e0e0e0;transform:scaleX(0.9181);font-weight:700;">Specular</span>
<div class="b" style="left:4px;top:763px;width:403px;height:1px;background:#1c1c1c;"></div>
<svg class="b" style="left:15px;top:773px;" width="7.3" height="4" viewBox="0 0 7.3 4"><path d="M0 0 L7.3 0 L3.65 4 Z" fill="#c8c8c8"/></svg>
<span class="t" style="left:28.00px;top:768.00px;color:#cacaca;transform:scaleX(0.9749);font-weight:700;font-size:10px;">PRIMARY</span>
<svg class="b" style="left:15px;top:794px;" width="12" height="12" viewBox="0 0 12 12"><path d="M6 2 L10 6 L6 10 L2 6 Z" fill="none" stroke="#b0b0b0" stroke-width="1.25" stroke-linejoin="miter"/></svg>
<span class="t" style="left:35.80px;top:792.00px;color:#cacaca;transform:scaleX(0.9678);">Color</span>
<svg class="b" style="left:83px;top:794px;" width="4" height="7.5" viewBox="0 0 4 7.5"><path d="M0 0 L4 3.75 L0 7.5 Z" fill="#c8c8c8"/></svg>
<div class="b" style="left:90px;top:790px;width:68px;height:17px;background:#141414;"></div>
<div class="b" style="left:91px;top:791px;width:66px;height:15px;background:#9ffcff;"></div>
<svg class="b" style="left:166px;top:790px;" width="17" height="17" viewBox="0 0 17 17"><path d="M2.2 14.8 L2.8 11.6 L9.6 4.8 L12.2 7.4 L5.4 14.2 Z" fill="none" stroke="#a8a8a8" stroke-width="1.3" stroke-linejoin="round"/><path d="M9 3.6 L13.4 8" stroke="#a8a8a8" stroke-width="1.6"/><circle cx="13.2" cy="3.8" r="2.7" fill="#a8a8a8"/></svg>
<svg class="b" style="left:15px;top:822px;" width="12" height="12" viewBox="0 0 12 12"><path d="M6 2 L10 6 L6 10 L2 6 Z" fill="none" stroke="#b0b0b0" stroke-width="1.25" stroke-linejoin="miter"/></svg>
<span class="t" style="left:35.80px;top:820.00px;color:#cacaca;transform:scaleX(0.9567);">Strength</span>
<div class="b" style="left:91px;top:819px;width:74px;height:18px;background:#1c1c1c;border-radius:3px;"></div>
<span class="t" style="left:115.70px;top:820.00px;color:#e6e6e6;transform:scaleX(0.9383);">60 %</span>
<div class="b" style="left:169px;top:825px;width:238px;height:4px;background:#191919;border-radius:2px;"></div>
<div class="b" style="left:169px;top:825px;width:142.39999999999998px;height:4px;background:#595ea4;border-radius:2px;"></div>
<div class="b" style="left:309px;top:821px;width:4px;height:12px;background:#bdbdbd;border-radius:2px;"></div>
<svg class="b" style="left:15px;top:844px;" width="12" height="12" viewBox="0 0 12 12"><path d="M6 2 L10 6 L6 10 L2 6 Z" fill="none" stroke="#b0b0b0" stroke-width="1.25" stroke-linejoin="miter"/></svg>
<span class="t" style="left:35.80px;top:842.00px;color:#cacaca;transform:scaleX(0.9021);">Sharpness</span>
<div class="b" style="left:91px;top:841px;width:74px;height:18px;background:#1c1c1c;border-radius:3px;"></div>
<span class="t" style="left:121.70px;top:842.00px;color:#e6e6e6;transform:scaleX(0.9846);">85</span>
<div class="b" style="left:169px;top:847px;width:238px;height:4px;background:#191919;border-radius:2px;"></div>
<div class="b" style="left:169px;top:847px;width:200.89999999999998px;height:4px;background:#595ea4;border-radius:2px;"></div>
<div class="b" style="left:368px;top:843px;width:4px;height:12px;background:#bdbdbd;border-radius:2px;"></div>
<span class="t" style="left:36.00px;top:864.00px;color:#cacaca;transform:scaleX(0.9438);">Texture</span>
<div class="b" style="left:91px;top:862px;width:18px;height:18px;background:#3d3d3d;border-radius:9px;"></div>
<svg class="b" style="left:95px;top:867.5px;" width="10" height="8" viewBox="0 0 10 8"><path d="M1.7000000000000002 2.2 L5 5.8 L8.3 2.2" fill="none" stroke="#e0e0e0" stroke-width="1.25" stroke-linecap="butt"/></svg>
<div class="b" style="left:112px;top:862px;width:277px;height:18px;background:#3d3d3d;border-radius:9px;"></div>
<svg class="b" style="left:392.7px;top:864px;" width="12.6" height="11" viewBox="0 0 13 11"><path d="M0.7 10.3 V0.9 H4.6 L5.4 2.2 H12.3 V10.3 Z" fill="none" stroke="#b0b0b0" stroke-width="1.3" stroke-linejoin="miter"/><path d="M0.7 0.9 H4.6 L5.4 2.2 H0.7 Z" fill="#b0b0b0"/></svg>
<div class="b" style="left:4px;top:892px;width:403px;height:1px;background:#1c1c1c;"></div>
<svg class="b" style="left:16px;top:902px;" width="4" height="7.5" viewBox="0 0 4 7.5"><path d="M0 0 L4 3.75 L0 7.5 Z" fill="#c8c8c8"/></svg>
<span class="t" style="left:27.80px;top:899.00px;color:#cacaca;transform:scaleX(0.9303);font-weight:700;font-size:10px;">SECONDARY</span>
<div class="b" style="left:4px;top:919px;width:403px;height:1px;background:#1c1c1c;"></div>
<div class="b" style="left:4px;top:924px;width:403px;height:1px;background:#3c3c3c;"></div>
<svg class="b" style="left:7px;top:934px;" width="12" height="12" viewBox="0 0 12 12"><path d="M6 2 L10 6 L6 10 L2 6 Z" fill="none" stroke="#b0b0b0" stroke-width="1.25" stroke-linejoin="miter"/></svg>
<span class="t" style="left:28.00px;top:932.00px;color:#cacaca;transform:scaleX(0.9116);">Back Specular</span>
<div class="b" style="left:100px;top:931px;width:74px;height:18px;background:#1c1c1c;border-radius:3px;"></div>
<span class="t" style="left:124.70px;top:932.00px;color:#e6e6e6;transform:scaleX(0.9383);">90 %</span>
<div class="b" style="left:178px;top:937px;width:229px;height:4px;background:#191919;border-radius:2px;"></div>
<div class="b" style="left:178px;top:937px;width:204.5px;height:4px;background:#595ea4;border-radius:2px;"></div>
<div class="b" style="left:380px;top:933px;width:4px;height:12px;background:#bdbdbd;border-radius:2px;"></div>
<div class="b" style="left:421px;top:144px;width:420px;height:820px;background:#2b2b2b;"></div>
<div class="b" style="left:421px;top:144px;width:420px;height:3px;background:#222;"></div>
<div class="b" style="left:421px;top:144px;width:3px;height:630px;background:#222;"></div>
<div class="b" style="left:421px;top:144px;width:420px;height:1px;background:#141414;"></div>
<div class="b" style="left:421px;top:144px;width:1px;height:630px;background:#141414;"></div>
<div class="b" style="left:840px;top:144px;width:1px;height:820px;background:#1e1e1e;"></div>
<div class="b" style="left:424px;top:147px;width:416px;height:22px;background:#1d1d1d;"></div>
<div class="b" style="left:424px;top:147px;width:69px;height:22px;background:#2b2b2b;"></div>
<span class="t" style="left:433.90px;top:150.00px;color:#e4e4e4;transform:scaleX(0.9922);">Attributes</span>
<span class="t" style="left:506.00px;top:150.00px;color:#777;transform:scaleX(0.8717);">Layers</span>
<div class="b" style="left:429px;top:175px;width:14px;height:2px;background:#ffffff;"></div>
<div class="b" style="left:429px;top:179px;width:14px;height:2px;background:#ffffff;"></div>
<div class="b" style="left:429px;top:183px;width:14px;height:2px;background:#ffffff;"></div>
<span class="t" style="left:452.80px;top:172.00px;color:#cacaca;transform:scaleX(0.9937);">Mode</span>
<span class="t" style="left:495.50px;top:172.00px;color:#cacaca;transform:scaleX(0.9381);">Edit</span>
<span class="t" style="left:528.80px;top:172.00px;color:#cacaca;transform:scaleX(0.9193);">User Data</span>
<svg class="b" style="left:683px;top:173px;" width="15" height="14" viewBox="0 0 15 14"><path d="M14.5 7 H2.5 M7.3 1.3 L1.6 7 L7.3 12.7" fill="none" stroke="#9a9a9a" stroke-width="1.7" stroke-linejoin="miter"/></svg>
<svg class="b" style="left:703px;top:173px;" width="15" height="14" viewBox="0 0 15 14"><path d="M0.5 7 H12.5 M7.7 1.3 L13.4 7 L7.7 12.7" fill="none" stroke="#4a4a4a" stroke-width="1.7" stroke-linejoin="miter"/></svg>
<svg class="b" style="left:723px;top:172px;" width="14" height="15" viewBox="0 0 14 15"><path d="M7 14.5 V2.5 M1.3 7.7 L7 2 L12.7 7.7" fill="none" stroke="#9a9a9a" stroke-width="1.7" stroke-linejoin="miter"/></svg>
<svg class="b" style="left:742.6px;top:172.2px;" width="16" height="16" viewBox="0 0 16 16"><circle cx="5.8" cy="5.8" r="4" fill="none" stroke="#9a9a9a" stroke-width="1.6"/><path d="M8.8 8.8 L14.2 14.2" stroke="#9a9a9a" stroke-width="1.8" stroke-linecap="butt"/></svg>
<svg class="b" style="left:763px;top:175px;" width="14" height="12" viewBox="0 0 14 12"><rect x="0" y="0" width="14" height="2" fill="#9a9a9a"/><rect x="2.5" y="4" width="9" height="2" fill="#9a9a9a"/><rect x="5" y="8" width="4" height="2" fill="#9a9a9a"/></svg>
<svg class="b" style="left:783.5px;top:173.2px;" width="13" height="14" viewBox="0 0 14 15"><rect x="1" y="7" width="12" height="7" rx="1" fill="none" stroke="#9a9a9a" stroke-width="1.7"/><path d="M3.4 7 V4.4 A3.6 3.6 0 0 1 10.6 4.4 V7" fill="none" stroke="#9a9a9a" stroke-width="1.7"/></svg>
<svg class="b" style="left:801px;top:172px;" width="17" height="17" viewBox="0 0 17 17"><circle cx="8.5" cy="8.5" r="7.3" fill="none" stroke="#9a9a9a" stroke-width="1.6"/><circle cx="8.5" cy="8.5" r="2.5" fill="none" stroke="#9a9a9a" stroke-width="1.3"/></svg>
<svg class="b" style="left:823px;top:174px;" width="14" height="14" viewBox="0 0 15 15"><path d="M6 1.2 H1 V13.8 H13.6 V9" fill="none" stroke="#9a9a9a" stroke-width="1.6" stroke-linejoin="round"/><path d="M4.5 10.3 L13.2 1.5 M8.3 1 H13.8 V6.5" fill="none" stroke="#9a9a9a" stroke-width="1.6"/></svg>
<svg class="b" style="left:429px;top:195px;" width="22" height="22" viewBox="0 0 22 22"><defs><linearGradient id="lgh425" x1="0" y1="0" x2="0" y2="1"><stop offset="0" stop-color="#fff"/><stop offset=".68" stop-color="#fff"/><stop offset=".95" stop-color="#000"/></linearGradient><mask id="mkh425" maskUnits="userSpaceOnUse" x="0" y="0" width="120" height="120"><rect width="120" height="120" fill="url(#lgh425)"/></mask><clipPath id="cph425"><rect x="0" y="0" width="22" height="22"/></clipPath><filter id="blh425" x="-20%" y="-20%" width="140%" height="140%"><feGaussianBlur stdDeviation="3"/></filter></defs><rect x="0" y="0" width="22" height="22" fill="#141414"/><g transform="translate(0 0)" clip-path="url(#cph425)"><rect x="0" y="0" width="22" height="22" fill="#9a9a9a"/><path d="M4.95 0 L9.28 0 L0 9.28 L0 4.95 Z" fill="#6e6e6e"/><path d="M13.60 0 L17.93 0 L0 17.93 L0 13.60 Z" fill="#6e6e6e"/><path d="M22.26 0 L26.58 0 L0 26.58 L0 22.26 Z" fill="#6e6e6e"/><path d="M30.91 0 L35.24 0 L0 35.24 L0 30.91 Z" fill="#6e6e6e"/><path d="M39.56 0 L43.89 0 L0 43.89 L0 39.56 Z" fill="#6e6e6e"/><path d="M48.22 0 L52.54 0 L0 52.54 L0 48.22 Z" fill="#6e6e6e"/><g transform="scale(0.18333333333333332)"></g></g></svg>
<span class="t" style="left:455.10px;top:198.00px;color:#cacaca;transform:scaleX(0.9694);">Hair Material [Hair Mat]</span>
<div class="b" style="left:733px;top:197px;width:100px;height:18px;background:#3d3d3d;border-radius:9px;"></div>
<div class="b" style="left:813px;top:197px;width:1px;height:18px;background:#2b2b2b;"></div>
<span class="t" style="left:739.50px;top:198.00px;color:#cacaca;transform:scaleX(0.9489);">Custom</span>
<svg class="b" style="left:818px;top:202.5px;" width="10" height="8" viewBox="0 0 10 8"><path d="M1.7000000000000002 2.2 L5 5.8 L8.3 2.2" fill="none" stroke="#e0e0e0" stroke-width="1.25" stroke-linecap="butt"/></svg>
<div class="b" style="left:431px;top:221px;width:43px;height:19px;background:#3d3d3d;border-radius:4px;"></div>
<span class="t" style="left:440.20px;top:223.00px;color:#d6d6d6;transform:scaleX(0.8747);">Basic</span>
<div class="b" style="left:478px;top:221px;width:45px;height:19px;background:#3d3d3d;border-radius:4px;"></div>
<span class="t" style="left:487.20px;top:223.00px;color:#d6d6d6;transform:scaleX(0.9678);">Color</span>
<div class="b" style="left:527px;top:221px;width:79px;height:19px;background:#53589b;border-radius:4px;"></div>
<span class="t" style="left:535.70px;top:223.00px;color:#ffffff;transform:scaleX(0.9541);">Backlit Color</span>
<div class="b" style="left:610px;top:221px;width:60px;height:19px;background:#3d3d3d;border-radius:4px;"></div>
<span class="t" style="left:618.70px;top:223.00px;color:#d6d6d6;transform:scaleX(0.9385);">Specular</span>
<div class="b" style="left:674px;top:221px;width:65px;height:19px;background:#3d3d3d;border-radius:4px;"></div>
<span class="t" style="left:683.20px;top:223.00px;color:#d6d6d6;transform:scaleX(0.8999);">Thickness</span>
<div class="b" style="left:743px;top:221px;width:40px;height:19px;background:#3d3d3d;border-radius:4px;"></div>
<span class="t" style="left:751.70px;top:223.00px;color:#d6d6d6;transform:scaleX(0.9068);">Frizz</span>
<div class="b" style="left:431px;top:244px;width:76px;height:19px;background:#3d3d3d;border-radius:4px;"></div>
<span class="t" style="left:439.95px;top:246.00px;color:#d6d6d6;transform:scaleX(0.9988);">Illumination</span>
<div class="b" style="left:511px;top:244px;width:50px;height:19px;background:#3d3d3d;border-radius:4px;"></div>
<span class="t" style="left:519.95px;top:246.00px;color:#d6d6d6;transform:scaleX(0.9296);">Assign</span>
<svg class="b" style="left:431px;top:272px;" width="7" height="4" viewBox="0 0 7 4"><path d="M0 0 L7 0 L3.5 4 Z" fill="#c4c4c4"/></svg>
<svg class="b" style="left:439px;top:267px;" width="122" height="122" viewBox="0 0 122 122"><defs><linearGradient id="lgp425" x1="0" y1="0" x2="0" y2="1"><stop offset="0" stop-color="#fff"/><stop offset=".68" stop-color="#fff"/><stop offset=".95" stop-color="#000"/></linearGradient><mask id="mkp425" maskUnits="userSpaceOnUse" x="0" y="0" width="120" height="120"><rect width="120" height="120" fill="url(#lgp425)"/></mask><clipPath id="cpp425"><rect x="0" y="0" width="120" height="120"/></clipPath><filter id="blp425" x="-20%" y="-20%" width="140%" height="140%"><feGaussianBlur stdDeviation="3"/></filter></defs><rect x="0" y="0" width="122" height="122" fill="#141414"/><g transform="translate(1 1)" clip-path="url(#cpp425)"><rect x="0" y="0" width="120" height="120" fill="#9a9a9a"/><path d="M27.00 0 L50.60 0 L0 50.60 L0 27.00 Z" fill="#696969"/><path d="M74.20 0 L97.80 0 L0 97.80 L0 74.20 Z" fill="#696969"/><path d="M121.40 0 L145.00 0 L0 145.00 L0 121.40 Z" fill="#696969"/><path d="M168.60 0 L192.20 0 L0 192.20 L0 168.60 Z" fill="#696969"/><path d="M215.80 0 L239.40 0 L0 239.40 L0 215.80 Z" fill="#696969"/><path d="M263.00 0 L286.60 0 L0 286.60 L0 263.00 Z" fill="#696969"/><g transform="scale(1.0)"><g fill="none" stroke-linecap="round" mask="url(#mkp425)"><g filter="url(#blp425)"><path d="M44 0 C38 28 56 50 64 74 C70 90 72 98 70 108" stroke="#a2aea6" stroke-opacity=".18" stroke-width="20"/><path d="M32 3 C40 0 52 0 60 3" stroke="#a8dede" stroke-opacity=".45" stroke-width="5"/></g><path d="M29.3 0 C20.7 22.3 30.8 56.7 41.9 101.6" stroke="#b8c4bc" stroke-opacity="0.13" stroke-width="0.8"/><path d="M29.0 0 C23.3 18.5 35.1 67.4 44.6 91.8" stroke="#b8c4bc" stroke-opacity="0.25" stroke-width="0.8"/><path d="M31.6 0 C22.9 24.9 33.9 57.7 45.6 109.4" stroke="#aeb8b0" stroke-opacity="0.19" stroke-width="0.8"/><path d="M32.2 0 C26.7 19.5 35.2 64.5 48.4 88.5" stroke="#b8c4bc" stroke-opacity="0.11" stroke-width="0.8"/><path d="M31.5 0 C24.4 22.7 39.2 59.6 49.5 96.3" stroke="#c4ccc6" stroke-opacity="0.21" stroke-width="0.8"/><path d="M32.3 0 C28.6 23.8 38.3 67.8 50.0 98.6" stroke="#aeb8b0" stroke-opacity="0.18" stroke-width="0.8"/><path d="M32.7 0 C26.2 25.7 36.3 62.7 49.7 108.4" stroke="#9aa49c" stroke-opacity="0.15" stroke-width="0.8"/><path d="M34.1 0 C25.5 18.7 39.9 64.4 51.8 105.1" stroke="#aeb8b0" stroke-opacity="0.11" stroke-width="0.8"/><path d="M36.1 0 C32.1 20.3 42.9 64.0 53.8 109.8" stroke="#aeb8b0" stroke-opacity="0.25" stroke-width="0.8"/><path d="M35.4 0 C27.7 20.3 46.6 60.8 54.7 97.8" stroke="#d8dfd9" stroke-opacity="0.11" stroke-width="0.8"/><path d="M36.5 0 C32.4 24.9 43.6 61.0 55.4 107.2" stroke="#9aa49c" stroke-opacity="0.21" stroke-width="0.8"/><path d="M36.9 0 C28.8 23.3 40.7 66.0 54.6 88.0" stroke="#c4ccc6" stroke-opacity="0.14" stroke-width="0.8"/><path d="M36.0 0 C30.4 25.6 48.4 62.2 56.8 94.9" stroke="#b8c4bc" stroke-opacity="0.20" stroke-width="0.8"/><path d="M39.6 0 C36.3 23.4 48.7 60.8 58.2 106.9" stroke="#d8dfd9" stroke-opacity="0.12" stroke-width="0.8"/><path d="M39.9 0 C32.1 19.3 45.6 56.6 56.9 87.6" stroke="#aeb8b0" stroke-opacity="0.19" stroke-width="0.8"/><path d="M40.1 0 C31.6 19.7 52.4 63.6 63.4 100.7" stroke="#9aa49c" stroke-opacity="0.20" stroke-width="0.8"/><path d="M40.6 0 C37.4 21.8 48.0 57.7 59.5 97.7" stroke="#9aa49c" stroke-opacity="0.22" stroke-width="0.8"/><path d="M41.2 0 C33.5 25.6 52.9 64.3 64.0 98.4" stroke="#aeb8b0" stroke-opacity="0.22" stroke-width="0.8"/><path d="M41.2 0 C37.3 22.1 58.1 60.3 64.9 88.2" stroke="#c4ccc6" stroke-opacity="0.19" stroke-width="0.8"/><path d="M43.8 0 C39.7 25.9 56.9 65.7 64.1 91.4" stroke="#d8dfd9" stroke-opacity="0.22" stroke-width="0.8"/><path d="M42.2 0 C33.4 18.2 54.6 59.1 66.3 94.5" stroke="#b8c4bc" stroke-opacity="0.25" stroke-width="0.8"/><path d="M43.8 0 C40.5 20.9 57.7 58.7 70.0 109.7" stroke="#c4ccc6" stroke-opacity="0.15" stroke-width="0.8"/><path d="M44.6 0 C35.6 25.3 60.1 63.7 71.4 100.6" stroke="#aeb8b0" stroke-opacity="0.25" stroke-width="0.8"/><path d="M46.5 0 C38.5 24.3 59.7 65.6 71.1 97.5" stroke="#d8dfd9" stroke-opacity="0.17" stroke-width="0.8"/><path d="M47.0 0 C43.9 18.2 58.9 61.6 68.2 89.8" stroke="#c4ccc6" stroke-opacity="0.20" stroke-width="0.8"/><path d="M47.1 0 C39.0 22.4 57.8 65.6 71.6 108.5" stroke="#aeb8b0" stroke-opacity="0.18" stroke-width="0.8"/><path d="M49.1 0 C45.0 19.7 60.5 59.5 72.5 106.9" stroke="#c4ccc6" stroke-opacity="0.22" stroke-width="0.8"/><path d="M47.3 0 C38.7 23.9 67.4 63.9 74.3 106.0" stroke="#b8c4bc" stroke-opacity="0.17" stroke-width="0.8"/><path d="M50.3 0 C44.5 18.1 64.6 58.2 75.1 98.8" stroke="#aeb8b0" stroke-opacity="0.22" stroke-width="0.8"/><path d="M47.9 0 C39.7 18.5 65.5 62.4 74.1 100.9" stroke="#d8dfd9" stroke-opacity="0.23" stroke-width="0.8"/><path d="M48.4 0 C41.1 24.2 67.8 62.7 77.7 92.0" stroke="#aeb8b0" stroke-opacity="0.17" stroke-width="0.8"/><path d="M51.1 0 C46.3 21.6 68.7 61.7 78.5 98.3" stroke="#c4ccc6" stroke-opacity="0.21" stroke-width="0.8"/><path d="M52.8 0 C47.2 25.5 74.9 57.6 82.2 92.2" stroke="#aeb8b0" stroke-opacity="0.16" stroke-width="0.8"/><path d="M51.3 0 C43.5 20.4 68.7 65.3 81.7 96.3" stroke="#9aa49c" stroke-opacity="0.12" stroke-width="0.8"/><path d="M54.2 0 C50.9 21.2 74.5 67.9 84.6 91.3" stroke="#c4ccc6" stroke-opacity="0.13" stroke-width="0.8"/><path d="M53.1 0 C45.2 20.5 74.8 56.2 83.0 94.1" stroke="#b8c4bc" stroke-opacity="0.17" stroke-width="0.8"/><path d="M54.8 0 C47.6 25.7 70.2 67.0 83.3 98.4" stroke="#c4ccc6" stroke-opacity="0.26" stroke-width="0.8"/><path d="M53.1 0 C48.8 20.2 70.7 61.1 83.7 87.0" stroke="#9aa49c" stroke-opacity="0.16" stroke-width="0.8"/><path d="M55.5 0 C48.4 20.2 78.7 58.2 86.3 97.9" stroke="#aeb8b0" stroke-opacity="0.14" stroke-width="0.8"/><path d="M54.1 0 C48.7 19.8 73.0 57.5 84.9 92.3" stroke="#aeb8b0" stroke-opacity="0.15" stroke-width="0.8"/><path d="M56.9 0 C48.7 22.2 78.9 57.3 91.0 92.4" stroke="#c4ccc6" stroke-opacity="0.14" stroke-width="0.8"/><path d="M56.1 0 C50.2 19.6 81.7 64.1 92.1 101.1" stroke="#9aa49c" stroke-opacity="0.16" stroke-width="0.8"/><path d="M56.1 0 C51.5 22.4 76.7 61.7 89.2 86.4" stroke="#d8dfd9" stroke-opacity="0.12" stroke-width="0.8"/><path d="M59.9 0 C56.0 21.1 81.4 64.3 91.4 97.9" stroke="#c4ccc6" stroke-opacity="0.15" stroke-width="0.8"/><path d="M60.7 0 C54.1 20.8 80.6 57.6 94.1 101.3" stroke="#aeb8b0" stroke-opacity="0.20" stroke-width="0.8"/><path d="M61.5 0 C56.5 21.0 83.6 67.7 93.6 87.3" stroke="#b8c4bc" stroke-opacity="0.14" stroke-width="0.8"/><path d="M57 26 C60 42 66 54 70 62 C73 68 76 72 78 75" stroke="#7fd08a" stroke-opacity=".5" stroke-width="0.9"/><path d="M55 72 C55 80 57 86 57 92" stroke="#7fc888" stroke-opacity=".35" stroke-width="0.9"/><path d="M42 30 C42 44 46 56 48 70" stroke="#86c890" stroke-opacity=".28" stroke-width="0.9"/><path d="M74 70 C80 76 88 84 91 100" stroke="#f4f8f4" stroke-opacity=".3" stroke-width="1"/></g></g></g></svg>
<span class="t" style="left:430.50px;top:420.00px;color:#e0e0e0;transform:scaleX(0.9318);font-weight:700;">Backlit Color</span>
<svg class="b" style="left:432px;top:444px;" width="12" height="12" viewBox="0 0 12 12"><path d="M6 2 L10 6 L6 10 L2 6 Z" fill="none" stroke="#b0b0b0" stroke-width="1.25" stroke-linejoin="miter"/></svg>
<span class="t" style="left:453.00px;top:442.00px;color:#cacaca;transform:scaleX(0.9381);">Blend</span>
<div class="b" style="left:486px;top:440px;width:86px;height:18px;background:#3a3a3a;border-radius:3px;"></div>
<span class="t" style="left:493.00px;top:441.00px;color:#cacaca;transform:scaleX(0.9740);">Normal</span>
<svg class="b" style="left:557.5px;top:444.7px;" width="10" height="8" viewBox="0 0 10 8"><path d="M1.7000000000000002 2.2 L5 5.8 L8.3 2.2" fill="none" stroke="#dcdcdc" stroke-width="1.25" stroke-linecap="butt"/></svg>
<svg class="b" style="left:575px;top:444px;" width="12" height="12" viewBox="0 0 12 12"><path d="M6 2 L10 6 L6 10 L2 6 Z" fill="none" stroke="#b0b0b0" stroke-width="1.25" stroke-linejoin="miter"/></svg>
<span class="t" style="left:596.00px;top:442.00px;color:#cacaca;transform:scaleX(1.0117);">Mix</span>
<div class="b" style="left:619px;top:441px;width:74px;height:18px;background:#1c1c1c;border-radius:3px;"></div>
<span class="t" style="left:640.95px;top:442.00px;color:#e6e6e6;transform:scaleX(0.9230);">100 %</span>
<div class="b" style="left:697px;top:447px;width:135px;height:4px;background:#191919;border-radius:2px;"></div>
<div class="b" style="left:697px;top:447px;width:133.0px;height:4px;background:#595ea4;border-radius:2px;"></div>
<div class="b" style="left:828px;top:443px;width:4px;height:12px;background:#bdbdbd;border-radius:2px;"></div>
<svg class="b" style="left:432px;top:477px;" width="12" height="12" viewBox="0 0 12 12"><path d="M6 2 L10 6 L6 10 L2 6 Z" fill="none" stroke="#b0b0b0" stroke-width="1.25" stroke-linejoin="miter"/></svg>
<span class="t" style="left:453.00px;top:475.00px;color:#cacaca;transform:scaleX(0.9678);">Color</span>
<svg class="b" style="left:501px;top:477px;" width="4" height="7.5" viewBox="0 0 4 7.5"><path d="M0 0 L4 3.75 L0 7.5 Z" fill="#c8c8c8"/></svg>
<div class="b" style="left:520px;top:475px;width:300px;height:30px;background:#171717;"></div>
<div class="b" style="left:521px;top:476px;width:298px;height:28px;background:linear-gradient(90deg,#3a2c21 0%,#392f27 6%,#35434a 14%,#2e5b6b 23%,#28829c 36%,#1fa6c8 50%,#16bfe4 63%,#0ccff5 77%,#04ddff 100%);"></div>
<svg class="b" style="left:665px;top:484px;" width="11" height="11" viewBox="0 0 11 11"><circle cx="5.5" cy="5.5" r="3.6" fill="#fff" stroke="#1a1a1a" stroke-width="1.4"/></svg>
<svg class="b" style="left:515px;top:505px;" width="13" height="18" viewBox="0 0 13 18"><path d="M6.5 0.6 L11.6 6.6 H1.4 Z" fill="#9e9e9e" stroke="#9e9e9e" stroke-width="0.8" stroke-linejoin="round"/><rect x="1.4" y="6.4" width="10.2" height="10.2" rx="0.8" fill="#c2c2c2" stroke="#c2c2c2" stroke-width="0.7"/><rect x="2.75" y="7.75" width="7.5" height="7.5" fill="#3a2c22" stroke="#0a0a0a" stroke-width="1.3"/></svg>
<svg class="b" style="left:812px;top:505px;" width="13" height="18" viewBox="0 0 13 18"><path d="M6.5 0.6 L11.6 6.6 H1.4 Z" fill="#f8a032" stroke="#f8a032" stroke-width="0.8" stroke-linejoin="round"/><rect x="1.4" y="6.4" width="10.2" height="10.2" rx="0.8" fill="#f8a032" stroke="#f8a032" stroke-width="0.7"/><rect x="2.75" y="7.75" width="7.5" height="7.5" fill="#0ad4fa" stroke="#0a0a0a" stroke-width="1.3"/></svg>
<div class="b" style="left:509px;top:529px;width:86px;height:18px;background:#3d3d3d;border-radius:9.0px;"></div>
<span class="t" style="left:520.20px;top:530.00px;color:#cacaca;transform:scaleX(0.8882);">Load Preset...</span>
<div class="b" style="left:601px;top:529px;width:85px;height:18px;background:#3d3d3d;border-radius:9.0px;"></div>
<span class="t" style="left:612.20px;top:530.00px;color:#cacaca;transform:scaleX(0.8666);">Save Preset...</span>
<svg class="b" style="left:432px;top:557px;" width="12" height="12" viewBox="0 0 12 12"><path d="M6 2 L10 6 L6 10 L2 6 Z" fill="none" stroke="#b0b0b0" stroke-width="1.25" stroke-linejoin="miter"/></svg>
<span class="t" style="left:453.00px;top:555.00px;color:#cacaca;transform:scaleX(0.9311);">Brightness</span>
<div class="b" style="left:509px;top:554px;width:74px;height:18px;background:#1c1c1c;border-radius:3px;"></div>
<span class="t" style="left:530.95px;top:555.00px;color:#e6e6e6;transform:scaleX(0.9230);">100 %</span>
<div class="b" style="left:587px;top:560px;width:245px;height:4px;background:#191919;border-radius:2px;"></div>
<div class="b" style="left:587px;top:560px;width:243.0px;height:4px;background:#595ea4;border-radius:2px;"></div>
<div class="b" style="left:828px;top:556px;width:4px;height:12px;background:#bdbdbd;border-radius:2px;"></div>
<span class="t" style="left:453.00px;top:584.00px;color:#cacaca;transform:scaleX(0.9438);">Texture</span>
<div class="b" style="left:509px;top:582px;width:18px;height:18px;background:#3d3d3d;border-radius:9px;"></div>
<svg class="b" style="left:513px;top:587.5px;" width="10" height="8" viewBox="0 0 10 8"><path d="M1.7000000000000002 2.2 L5 5.8 L8.3 2.2" fill="none" stroke="#e0e0e0" stroke-width="1.25" stroke-linecap="butt"/></svg>
<div class="b" style="left:530px;top:582px;width:284px;height:18px;background:#3d3d3d;border-radius:9px;"></div>
<svg class="b" style="left:817.7px;top:584px;" width="12.6" height="11" viewBox="0 0 13 11"><path d="M0.7 10.3 V0.9 H4.6 L5.4 2.2 H12.3 V10.3 Z" fill="none" stroke="#b0b0b0" stroke-width="1.3" stroke-linejoin="miter"/><path d="M0.7 0.9 H4.6 L5.4 2.2 H0.7 Z" fill="#b0b0b0"/></svg>
<svg class="b" style="left:432px;top:608px;" width="12" height="12" viewBox="0 0 12 12"><path d="M6 2 L10 6 L6 10 L2 6 Z" fill="none" stroke="#4a4a4a" stroke-width="1.25" stroke-linejoin="miter"/></svg>
<span class="t" style="left:453.00px;top:606.00px;color:#6a6a6a;transform:scaleX(0.9381);">Blend</span>
<div class="b" style="left:487px;top:604px;width:85px;height:18px;background:#323232;border-radius:3px;"></div>
<span class="t" style="left:493.00px;top:605.00px;color:#6a6a6a;transform:scaleX(0.9740);">Normal</span>
<svg class="b" style="left:557px;top:608.7px;" width="10" height="8" viewBox="0 0 10 8"><path d="M1.7000000000000002 2.1 L5 5.9 L8.3 2.1" fill="none" stroke="#666" stroke-width="1.2" stroke-linecap="butt"/></svg>
<svg class="b" style="left:575px;top:608px;" width="12" height="12" viewBox="0 0 12 12"><path d="M6 2 L10 6 L6 10 L2 6 Z" fill="none" stroke="#4a4a4a" stroke-width="1.25" stroke-linejoin="miter"/></svg>
<span class="t" style="left:596.00px;top:606.00px;color:#6a6a6a;transform:scaleX(0.9838);">Mix</span>
<div class="b" style="left:619px;top:605px;width:74px;height:18px;background:#2f2f2f;border-radius:3px;"></div>
<span class="t" style="left:640.95px;top:606.00px;color:#6d6d6d;transform:scaleX(0.9230);">100 %</span>
<div class="b" style="left:697px;top:611px;width:135px;height:4px;background:#313358;border-radius:2px;"></div>
<span class="t" style="left:440.50px;top:640.00px;color:#b8b8b8;transform:scaleX(0.9185);">Var:</span>
<svg class="b" style="left:464px;top:642px;" width="12" height="12" viewBox="0 0 12 12"><path d="M6 2 L10 6 L6 10 L2 6 Z" fill="none" stroke="#b0b0b0" stroke-width="1.25" stroke-linejoin="miter"/></svg>
<span class="t" style="left:485.00px;top:640.00px;color:#cacaca;transform:scaleX(0.9744);">H</span>
<div class="b" style="left:498px;top:639px;width:74px;height:18px;background:#1c1c1c;border-radius:3px;"></div>
<span class="t" style="left:525.70px;top:640.00px;color:#e6e6e6;transform:scaleX(0.9381);">0 %</span>
<svg class="b" style="left:576px;top:642px;" width="12" height="12" viewBox="0 0 12 12"><path d="M6 2 L10 6 L6 10 L2 6 Z" fill="none" stroke="#b0b0b0" stroke-width="1.25" stroke-linejoin="miter"/></svg>
<span class="t" style="left:596.50px;top:640.00px;color:#cacaca;transform:scaleX(0.8603);">S</span>
<div class="b" style="left:608px;top:639px;width:74px;height:18px;background:#1c1c1c;border-radius:3px;"></div>
<span class="t" style="left:635.70px;top:640.00px;color:#e6e6e6;transform:scaleX(0.9381);">0 %</span>
<svg class="b" style="left:686px;top:642px;" width="12" height="12" viewBox="0 0 12 12"><path d="M6 2 L10 6 L6 10 L2 6 Z" fill="none" stroke="#b0b0b0" stroke-width="1.25" stroke-linejoin="miter"/></svg>
<span class="t" style="left:706.50px;top:640.00px;color:#cacaca;transform:scaleX(0.9906);">V</span>
<div class="b" style="left:719px;top:639px;width:74px;height:18px;background:#1c1c1c;border-radius:3px;"></div>
<span class="t" style="left:746.70px;top:640.00px;color:#e6e6e6;transform:scaleX(0.9381);">0 %</span>
<div class="b" style="left:429px;top:666px;width:403px;height:1px;background:#1c1c1c;"></div>
<svg class="b" style="left:441px;top:674px;" width="4" height="7.5" viewBox="0 0 4 7.5"><path d="M0 0 L4 3.75 L0 7.5 Z" fill="#c8c8c8"/></svg>
<span class="t" style="left:453.00px;top:671.00px;color:#cacaca;transform:scaleX(0.9167);font-weight:700;font-size:10px;">ROOTS</span>
<div class="b" style="left:429px;top:691px;width:403px;height:1px;background:#1c1c1c;"></div>
<svg class="b" style="left:441px;top:701px;" width="4" height="7.5" viewBox="0 0 4 7.5"><path d="M0 0 L4 3.75 L0 7.5 Z" fill="#c8c8c8"/></svg>
<span class="t" style="left:453.00px;top:698.00px;color:#cacaca;transform:scaleX(0.9265);font-weight:700;font-size:10px;">TIPS</span>
<div class="b" style="left:429px;top:718px;width:403px;height:1px;background:#1c1c1c;"></div>
<svg class="b" style="left:441px;top:728px;" width="4" height="7.5" viewBox="0 0 4 7.5"><path d="M0 0 L4 3.75 L0 7.5 Z" fill="#c8c8c8"/></svg>
<span class="t" style="left:453.00px;top:725.00px;color:#cacaca;transform:scaleX(1.0172);font-weight:700;font-size:10px;">TINT</span>
<div class="b" style="left:429px;top:745px;width:403px;height:1px;background:#1c1c1c;"></div>
<svg class="b" style="left:441px;top:755px;" width="4" height="7.5" viewBox="0 0 4 7.5"><path d="M0 0 L4 3.75 L0 7.5 Z" fill="#c8c8c8"/></svg>
<span class="t" style="left:453.00px;top:752.00px;color:#cacaca;transform:scaleX(0.8913);font-weight:700;font-size:10px;">SURFACE</span>
<div class="b" style="left:429px;top:772px;width:403px;height:1px;background:#1c1c1c;"></div>
</body></html>
